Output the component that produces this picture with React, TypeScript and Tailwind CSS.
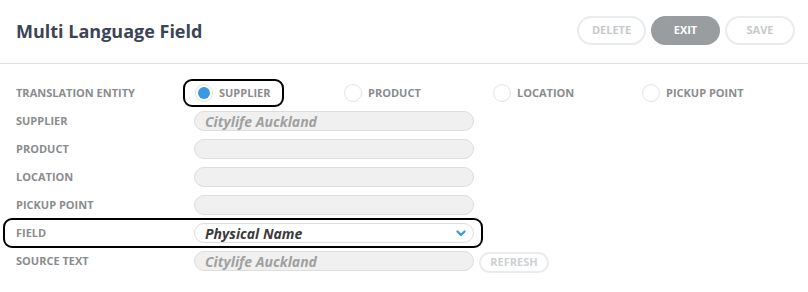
import { useState } from "react";

const entities = ["Supplier", "Product", "Location", "Pickup Point"];

function TextRow({ label, value }: { label: string; value?: string }) {
  return (
    <div className="flex h-[28px] items-center">
      <div className="w-[178px] text-[11px] font-bold uppercase text-[#8a8c8e]">{label}</div>
      <div className="flex h-[20px] w-[280px] items-center rounded-full border border-[#dddddd] bg-[#f0f0f0] pl-[10px] text-[14px] font-bold italic text-[#a0a0a0]">
        {value}
      </div>
    </div>
  );
}

export default function App() {
  const [entity, setEntity] = useState("Supplier");

  return (
    <div className="h-[292px] w-[808px] bg-white font-['Open_Sans',sans-serif]">
      {/* Header */}
      <div className="flex h-[63px] items-center justify-between pl-4 pr-[13px]">
        <h1 className="text-[18px] font-bold text-[#3c4458]">Multi Language Field</h1>
        <div className="flex gap-[5px] pb-[3px]">
          <button className="h-[29px] w-[69px] rounded-full border-2 border-[#e8ecec] text-[11px] font-bold text-[#c6c9cb]">
            DELETE
          </button>
          <button className="h-[29px] w-[69px] rounded-full bg-[#9a9da0] text-[11px] font-bold text-white">
            EXIT
          </button>
          <button className="h-[29px] w-[70px] rounded-full border-2 border-[#e8ecec] text-[11px] font-bold text-[#c6c9cb]">
            SAVE
          </button>
        </div>
      </div>
      <div className="h-px bg-[#dedaf2]" />

      {/* Form */}
      <div className="pl-4 pt-[15px]">
        <div className="flex h-[28px] items-center">
          <div className="w-[167px] text-[11px] font-bold uppercase text-[#8a8c8e]">Translation Entity</div>
          {entities.map((e) => {
            const active = entity === e;
            return (
              <div key={e} className="w-[149px]">
                <button
                  onClick={() => setEntity(e)}
                  className={`flex h-[28px] items-center gap-[6px] rounded-[9px] border-2 pl-[10px] pr-[12px] ${
                    active ? "border-black" : "border-transparent"
                  }`}
                >
                  <span className="flex h-[18px] w-[18px] items-center justify-center rounded-full border border-[#e4e4e4] bg-white">
                    {active && <span className="h-[12px] w-[12px] rounded-full bg-[#3b99e0]" />}
                  </span>
                  <span className="text-[11px] font-bold uppercase text-[#8a8c8e]">{e}</span>
                </button>
              </div>
            );
          })}
        </div>
        <TextRow label="Supplier" value="Citylife Auckland" />
        <TextRow label="Product" />
        <TextRow label="Location" />
        <TextRow label="Pickup Point" />

        {/* Field (highlighted) */}
        <div className="-mx-[13px] -my-px flex h-[30px] w-[480px] items-center rounded-[9px] border-2 border-black pl-[11px]">
          <div className="w-[178px] text-[11px] font-bold uppercase text-[#8a8c8e]">Field</div>
          <div className="flex h-[20px] w-[280px] items-center justify-between rounded-full border border-[#dddddd] bg-white pl-[10px] pr-[7px] text-[14px] font-bold italic text-[#3a3a3a]">
            Physical Name
            <svg width="10" height="7" viewBox="0 0 10 7" fill="none">
              <path d="M1.5 1.5L5 5L8.5 1.5" stroke="#3b99e0" strokeWidth="2.2" strokeLinecap="round" strokeLinejoin="round" />
            </svg>
          </div>
        </div>

        <div className="flex h-[28px] items-center">
          <div className="w-[178px] text-[11px] font-bold uppercase text-[#8a8c8e]">Source Text</div>
          <div className="flex h-[20px] w-[280px] items-center rounded-full border border-[#dddddd] bg-[#f0f0f0] pl-[10px] text-[14px] font-bold italic text-[#a0a0a0]">
            Citylife Auckland
          </div>
          <button className="ml-[5px] mt-[2px] h-[21px] w-[70px] rounded-full border-2 border-[#e8ecec] text-[11px] font-bold text-[#cdd0d2]">
            REFRESH
          </button>
        </div>
      </div>
    </div>
  );
}
